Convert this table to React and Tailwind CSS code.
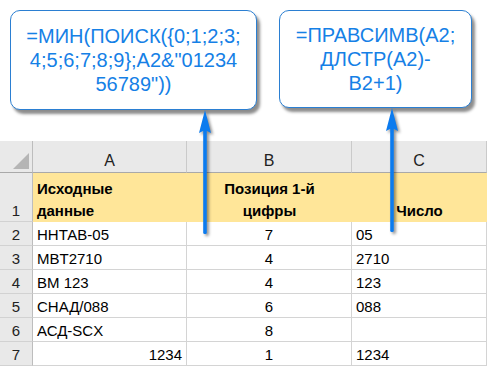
const rows = [
  { n: 2, a: 'ННТАВ-05', b: '7', c: '05' },
  { n: 3, a: 'MBT2710', b: '4', c: '2710' },
  { n: 4, a: 'BM 123', b: '4', c: '123' },
  { n: 5, a: 'СНАД/088', b: '6', c: '088' },
  { n: 6, a: 'АСД-SCX', b: '8', c: '' },
  { n: 7, a: '1234', b: '1', c: '1234', aRight: true },
];

function Callout({ className, lines }) {
  return (
    <div
      className={`flex flex-col items-center justify-center rounded-[10px] border-[1.5px] border-[#2b7fd2] bg-white shadow-[3px_4px_3px_rgba(0,0,0,0.45)] text-[20px] leading-[24px] text-[#1580e6] ${className}`}
    >
      {lines.map((l) => (
        <span key={l} className="whitespace-nowrap">
          {l}
        </span>
      ))}
    </div>
  );
}

function Arrow({ className }) {
  return (
    <svg
      className={`absolute drop-shadow-[2px_2px_1.5px_rgba(0,0,0,0.45)] ${className}`}
      width="16"
      height="126"
      viewBox="0 0 16 126"
    >
      <rect x="6.2" y="18" width="3.6" height="106" rx="1.5" fill="#0b7bef" />
      <path d="M8 0 L14 23 L8 20 L2 23 Z" fill="#0b7bef" />
    </svg>
  );
}

export default function App() {
  const rowHdr =
    'bg-[#e9e9e9] border-r border-r-[#bdbdbd] border-b border-b-[#d2d2d2] flex items-end justify-center pb-[1px] text-[#222]';
  const cell = 'border-r border-b border-[#d4d4d4] flex items-end pb-[1px] px-[4px] text-black';

  return (
    <div className="relative w-[487px] h-[367px] overflow-hidden bg-white font-['Liberation_Sans',Arial,sans-serif]">
      <div className="flex h-[141px] items-start pl-[10px] pt-[10px] gap-[22px]">
        <Callout
          className="w-[247px] h-[100px]"
          lines={['=МИН(ПОИСК({0;1;2;3;', '4;5;6;7;8;9};A2&"01234', '56789"))']}
        />
        <Callout
          className="w-[193px] h-[98px]"
          lines={['=ПРАВСИМВ(A2;', 'ДЛСТР(A2)-', 'B2+1)']}
        />
      </div>

      <div className="grid grid-cols-[33px_154px_165px_135px] text-[15px] leading-[18px]">
        {/* column headers */}
        <div className="relative h-[32px] bg-[#e9e9e9] border-r border-r-[#bdbdbd] border-b border-b-[#a9a9a9]">
          <svg className="absolute right-[3px] bottom-[3px]" width="16" height="16" viewBox="0 0 16 16">
            <path d="M16 0 L16 16 L0 16 Z" fill="#b5b5b5" />
          </svg>
        </div>
        {['A', 'B', 'C'].map((l) => (
          <div
            key={l}
            className="h-[32px] bg-[#e9e9e9] border-r border-r-[#cacaca] border-b border-b-[#a9a9a9] flex items-end justify-center pb-[2px] text-[16px] text-[#222]"
          >
            {l}
          </div>
        ))}

        {/* row 1 */}
        <div className={`h-[49px] ${rowHdr}`}>1</div>
        <div className="h-[49px] bg-[#ffe699] flex flex-col justify-end px-[4px] font-bold leading-[22px]">
          <span>Исходные</span>
          <span>данные</span>
        </div>
        <div className="h-[49px] bg-[#ffe699] flex flex-col items-center justify-end font-bold leading-[22px]">
          <span>Позиция 1-й</span>
          <span>цифры</span>
        </div>
        <div className="h-[49px] bg-[#ffe699] flex items-end justify-center font-bold leading-[22px]">
          <span>Число</span>
        </div>

        {rows.map((r) => (
          <div key={r.n} className="contents">
            <div className={`h-[24px] ${rowHdr}`}>{r.n}</div>
            <div className={`h-[24px] ${cell} ${r.aRight ? 'justify-end' : ''}`}>{r.a}</div>
            <div className={`h-[24px] ${cell} justify-center`}>{r.b}</div>
            <div className={`h-[24px] ${cell}`}>{r.c}</div>
          </div>
        ))}
      </div>

      <Arrow className="left-[197px] top-[110px]" />
      <Arrow className="left-[384px] top-[108px]" />
    </div>
  );
}
